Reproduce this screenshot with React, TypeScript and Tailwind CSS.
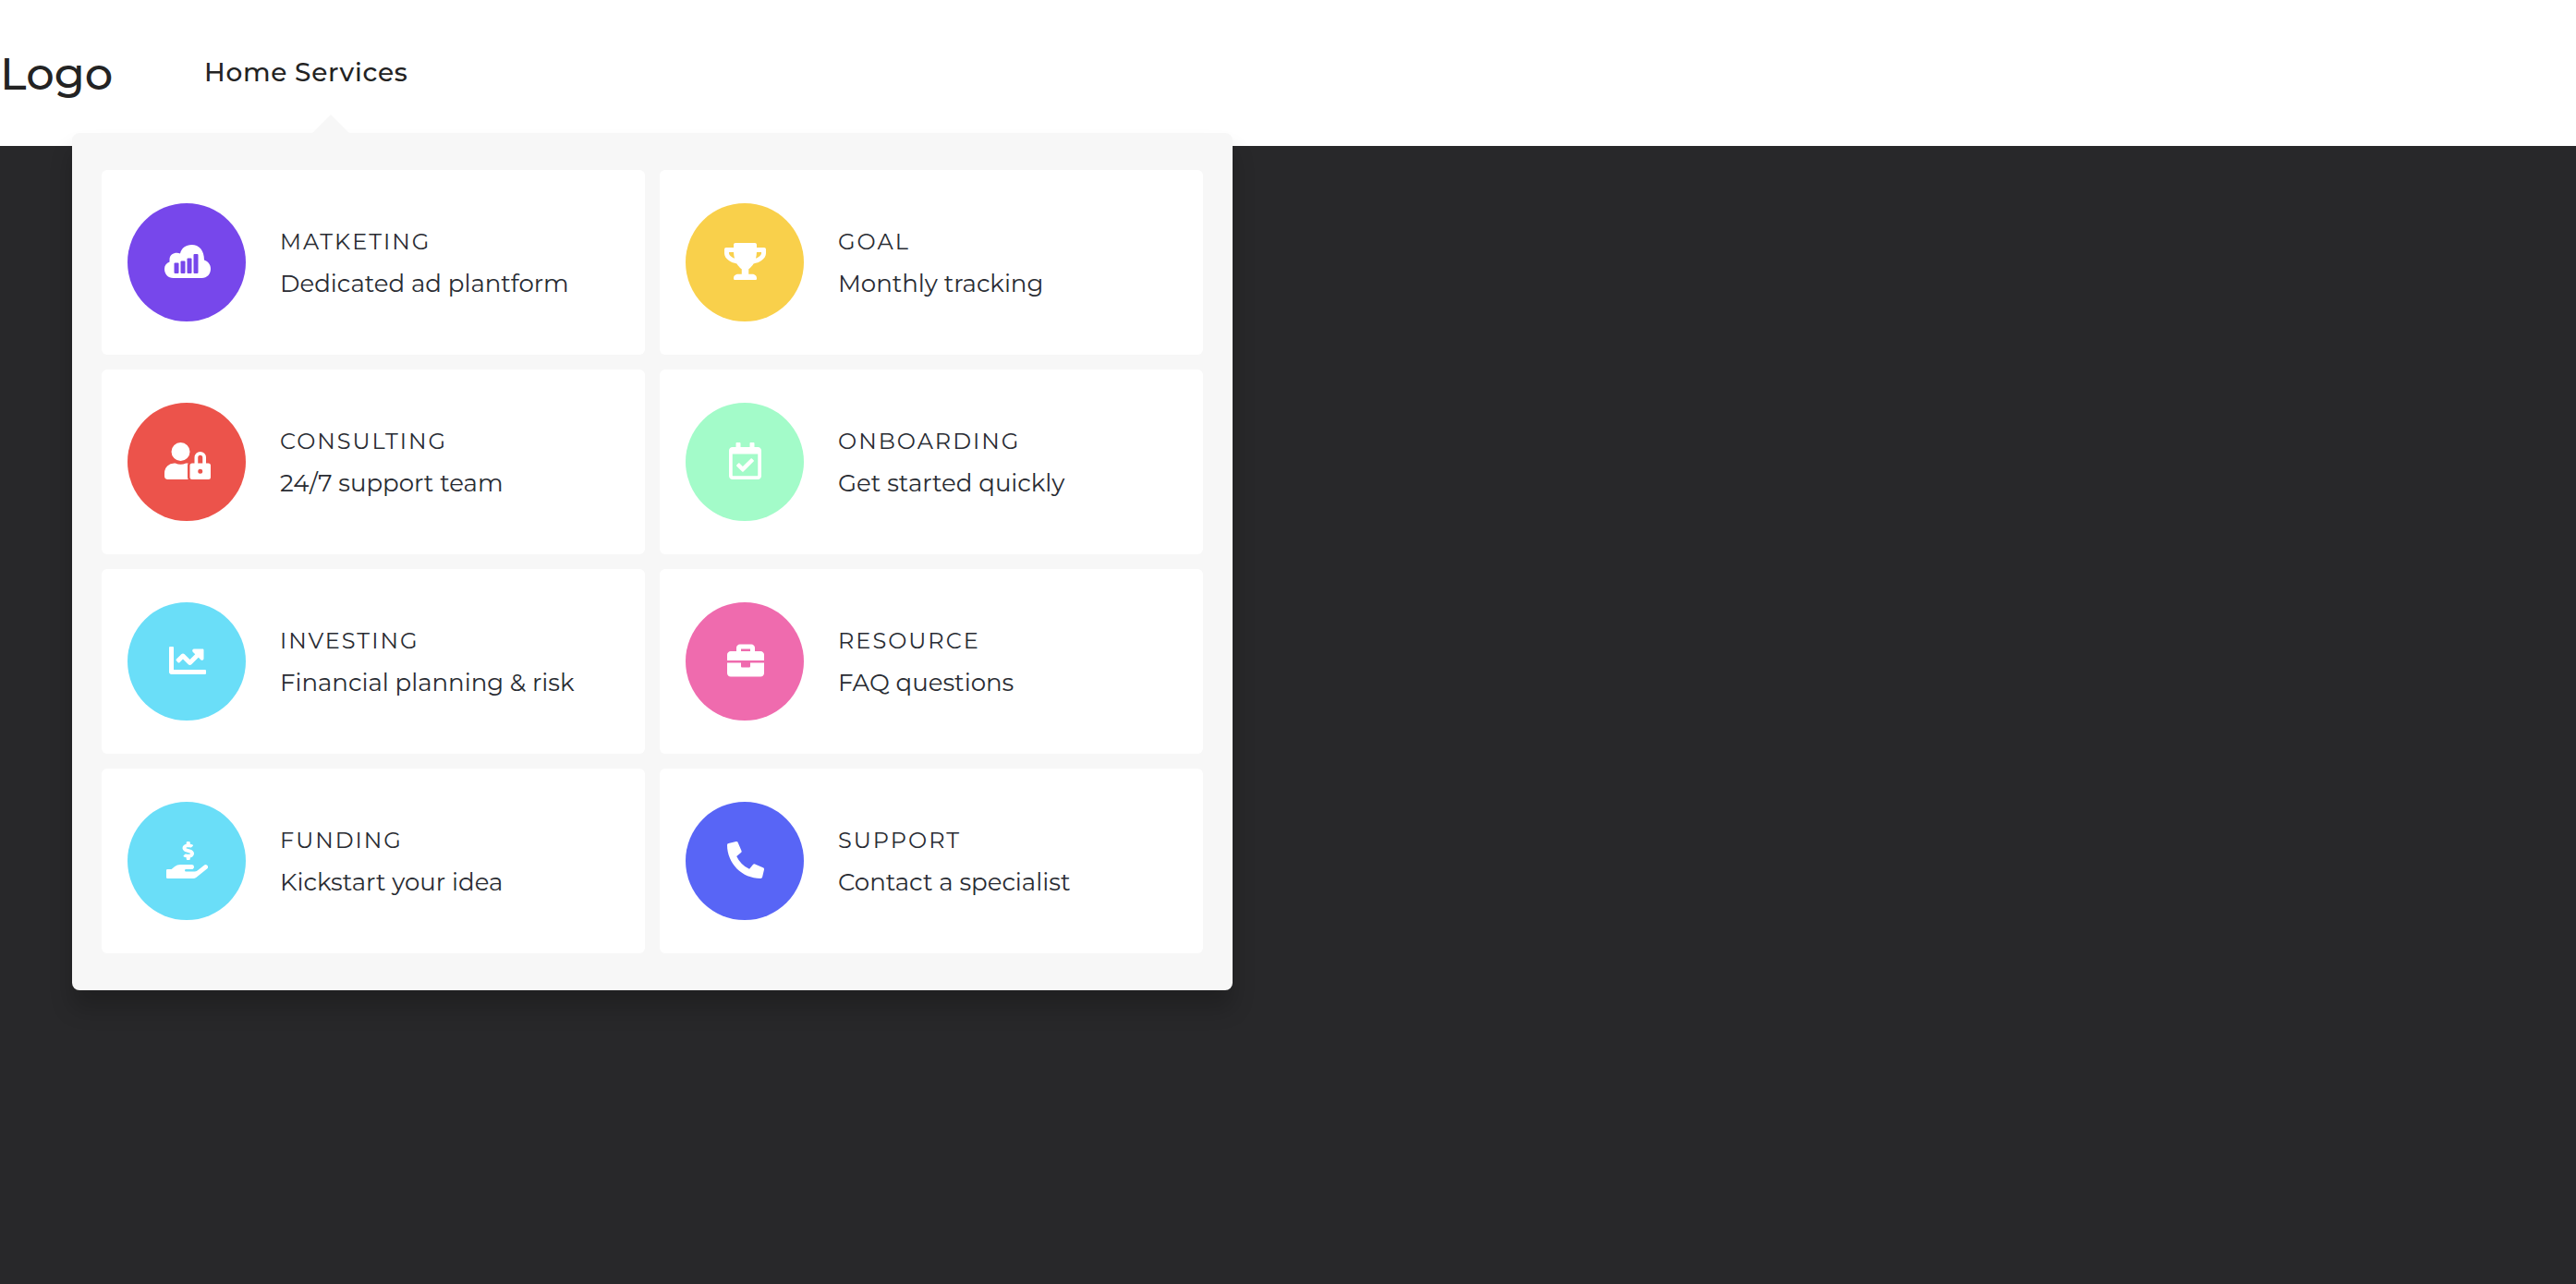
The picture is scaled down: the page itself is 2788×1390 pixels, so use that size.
import type { IconType } from "react-icons";
import {
  FaBriefcase,
  FaChartLine,
  FaHandHoldingUsd,
  FaPhoneAlt,
  FaRegCalendarCheck,
  FaTrophy,
  FaUserLock,
} from "react-icons/fa";

function CloudChart({ className }: { className?: string }) {
  return (
    <svg viewBox="0 0 50 36" className={className} aria-hidden="true">
      <path
        fill="currentColor"
        d="M9.500 36h31c5.500 0 9.500-4.300 9.500-10 0-4.500-2.500-8-7-9.500C43 6 37.500 0 29.500 0 23 0 18.500 3.500 17 9.500c-5-2-11.500.5-11.500 6.500v2.500C2 20 0 22.500 0 26c0 6 4 10 9.500 10Z"
      />
      <g fill="#7747eb">
        <rect x="10.500" y="19.500" width="5" height="11.500" rx="1" />
        <rect x="17.500" y="17.500" width="5" height="13.500" rx="1" />
        <rect x="24.500" y="14.500" width="5" height="16.500" rx="1" />
        <rect x="31.500" y="10" width="5" height="21" rx="1" />
      </g>
    </svg>
  );
}

type Service = {
  title: string;
  text: string;
  color: string;
  Icon: IconType | typeof CloudChart;
  iconClass: string;
};

const services: Service[] = [
  { title: "MATKETING", text: "Dedicated ad plantform", color: "bg-[#7747eb]", Icon: CloudChart, iconClass: "h-9 w-[50px]" },
  { title: "GOAL", text: "Monthly tracking", color: "bg-[#f9d04b]", Icon: FaTrophy, iconClass: "h-10 w-[45px]" },
  { title: "CONSULTING", text: "24/7 support team", color: "bg-[#ec534b]", Icon: FaUserLock, iconClass: "h-10 w-[50px]" },
  { title: "ONBOARDING", text: "Get started quickly", color: "bg-[#a3fbc9]", Icon: FaRegCalendarCheck, iconClass: "h-10 w-[35px]" },
  { title: "INVESTING", text: "Financial planning & risk", color: "bg-[#6adef8]", Icon: FaChartLine, iconClass: "size-10" },
  { title: "RESOURCE", text: "FAQ questions", color: "bg-[#ef6bae]", Icon: FaBriefcase, iconClass: "size-10" },
  { title: "FUNDING", text: "Kickstart your idea", color: "bg-[#6adef8]", Icon: FaHandHoldingUsd, iconClass: "h-10 w-[45px]" },
  { title: "SUPPORT", text: "Contact a specialist", color: "bg-[#5865f6]", Icon: FaPhoneAlt, iconClass: "size-10" },
];

function ServiceCard({ title, text, color, Icon, iconClass }: Service) {
  return (
    <a href="#" className="flex items-center gap-[37px] rounded-md bg-white px-7 py-9 text-[#292c33]">
      <span className={`flex size-32 shrink-0 items-center justify-center rounded-full pb-0.5 pl-px text-white ${color}`}>
        <Icon className={iconClass} />
      </span>
      <span className="flex flex-col gap-1 whitespace-nowrap pt-0.5">
        <span className="text-2xl leading-10 tracking-[2px]">{title}</span>
        <span className="text-[26px] leading-[42px]">{text}</span>
      </span>
    </a>
  );
}

export default function App() {
  return (
    <div className="min-h-screen bg-[#28282a] font-['Montserrat','Inter',sans-serif]">
      <header className="flex h-[158px] items-center bg-white text-[#232323]">
        <a href="#" className="w-[221px] pt-0.5 text-5xl leading-none font-medium">
          Logo
        </a>
        <nav className="flex items-center gap-2 pb-0.5 text-[28px] leading-10 font-medium tracking-wide">
          <a href="#">Home</a>
          <a href="#" aria-haspopup="true" aria-expanded="true">
            Services
          </a>
        </nav>
      </header>
      <div className="relative -mt-3.5 ml-[78px] w-[1256px] max-w-[calc(100%-78px)] rounded-lg bg-[#f7f7f7] px-8 py-10 shadow-[0_20px_25px_rgba(0,0,0,0.2)]">
        <svg viewBox="0 0 40 20" className="absolute -top-5 left-[260px] h-5 w-10" aria-hidden="true">
          <path d="M0 20 20 0l20 20Z" fill="#f7f7f7" />
        </svg>
        <div className="grid grid-cols-2 gap-4">
          {services.map((service) => (
            <ServiceCard key={service.title} {...service} />
          ))}
        </div>
      </div>
    </div>
  );
}
